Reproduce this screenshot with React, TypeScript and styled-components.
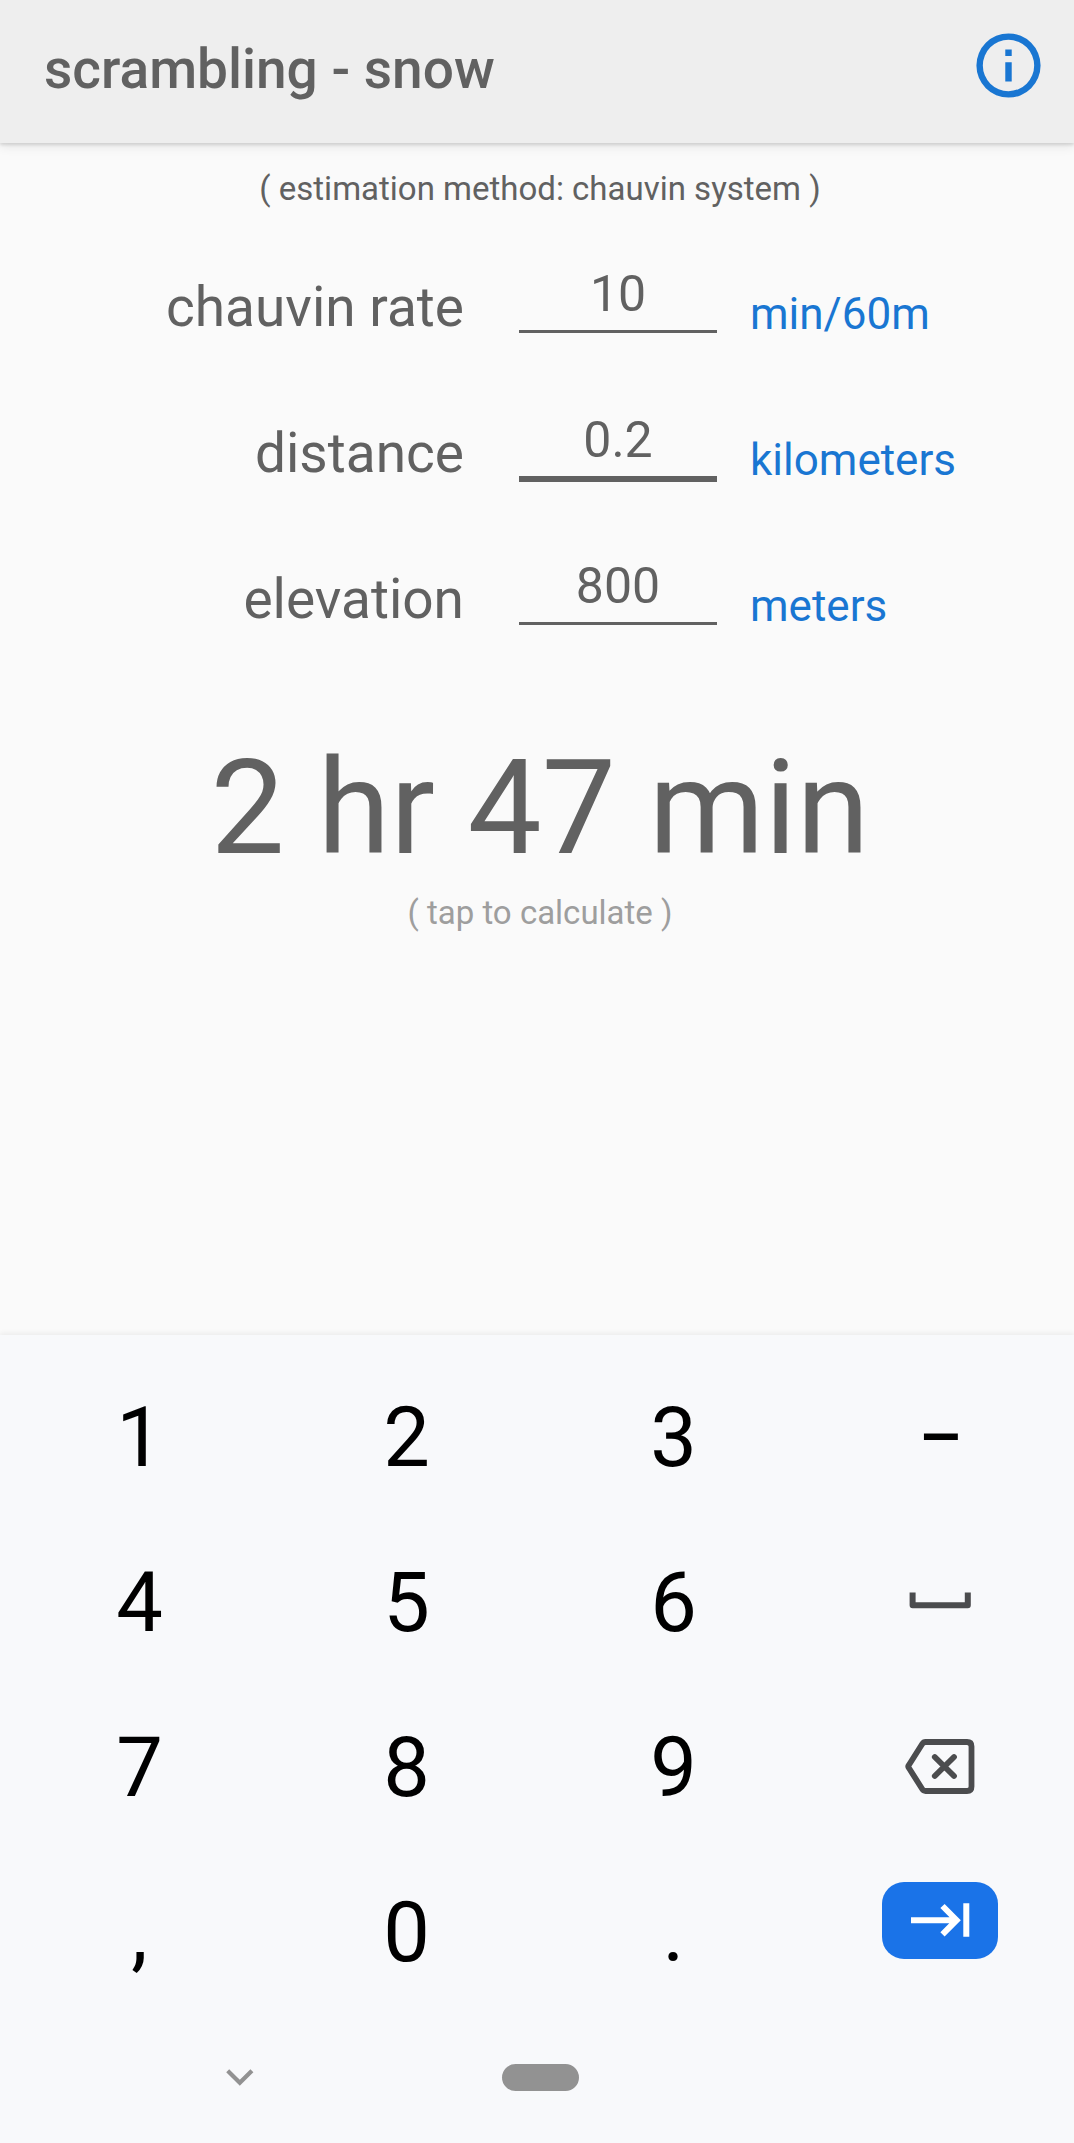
import React from "react";
import styled, { createGlobalStyle } from "styled-components";

const Global = createGlobalStyle`
  * { box-sizing: border-box; }
  body { margin: 0; background: #fafafa; font-family: Roboto, "Liberation Sans", sans-serif; }
`;

const Screen = styled.div`
  width: 1074px;
  height: 2143px;
  display: flex;
  flex-direction: column;
  background: #fafafa;
  color: #616161;
  overflow: hidden;
`;

const Header = styled.header`
  height: 143px;
  flex: none;
  background: #eeeeee;
  box-shadow: 0 2px 3px rgba(0, 0, 0, 0.12), 0 4px 10px rgba(0, 0, 0, 0.08);
  display: flex;
  align-items: flex-start;
  justify-content: space-between;
  padding: 27px 27px 0 44px;
`;

const Title = styled.h1`
  margin: 10px 0 0;
  font-size: 55px;
  line-height: 64px;
  font-weight: 500;
  white-space: nowrap;
`;

const InfoIcon = styled.svg`
  width: 77px;
  height: 77px;
  display: block;
`;

const Main = styled.main`
  height: 1192px;
  flex: none;
  display: flex;
  flex-direction: column;
  align-items: center;
  padding-top: 26px;
`;

const Note = styled.p<{ $muted?: boolean }>`
  margin: 0;
  padding-left: 6px;
  font-size: 33px;
  line-height: 40px;
  white-space: nowrap;
  color: ${p => (p.$muted ? "#9e9e9e" : "#616161")};
`;

const Form = styled.div`
  width: 100%;
  margin-top: 54px;
`;

const Row = styled.label`
  height: 146px;
  display: grid;
  grid-template-columns: 464px 198px 1fr;
  column-gap: 55px;
  align-items: start;
`;

const Name = styled.span`
  text-align: right;
  font-size: 55px;
  line-height: 64px;
  padding-top: 12px;
  white-space: nowrap;
`;

const Value = styled.span<{ $active?: boolean }>`
  padding-top: 1px;
  font-size: 50px;
  line-height: 60px;
  height: ${p => (p.$active ? 73 : 70)}px;
  text-align: center;
  border-bottom: ${p => (p.$active ? 6 : 3)}px solid #616161;
`;

const Unit = styled.span`
  color: #1976d2;
  font-size: 44px;
  line-height: 52px;
  padding-top: 25px;
  margin-left: -22px;
`;

const Result = styled.div`
  margin-top: 30px;
  padding-left: 6px;
  font-size: 132px;
  line-height: 154px;
  white-space: nowrap;
`;

const Hint = styled.div`
  margin-top: 8px;
`;

const Keyboard = styled.section`
  flex: 1;
  background: #f8f9fb;
  box-shadow: 0 -2px 5px rgba(0, 0, 0, 0.06);
  padding-top: 20px;
`;

const Keys = styled.div`
  display: grid;
  grid-template-columns: repeat(4, 267px);
  grid-auto-rows: 165px;
  padding-left: 6px;
`;

const Key = styled.div<{ $dash?: boolean }>`
  display: flex;
  align-items: center;
  justify-content: center;
  font-size: ${p => (p.$dash ? 68 : 83)}px;
  font-weight: ${p => (p.$dash ? 500 : 400)};
  color: #000;
`;

const IconKey = styled(Key)<{ $raise: number }>`
  padding: 0 2px ${p => p.$raise}px 0;
`;

const NextButton = styled.div`
  width: 116px;
  height: 77px;
  border-radius: 22px;
  background: #1a73e8;
`;

const Glyph = styled.svg`
  display: block;
  overflow: visible;
  fill: none;
`;

const NavBar = styled.nav`
  height: 124px;
  display: flex;
  align-items: center;
  padding-left: 226px;
`;

const HomePill = styled.div`
  width: 77px;
  height: 27px;
  margin-left: 248px;
  border-radius: 14px;
  background: #929292;
`;

const fields = [
  { name: "chauvin rate", value: "10", unit: "min/60m" },
  { name: "distance", value: "0.2", unit: "kilometers", active: true },
  { name: "elevation", value: "800", unit: "meters" },
];

const SpaceGlyph = () => (
  <Glyph width="62" height="16" viewBox="0 0 62 16">
    <path d="M3.6 0.6V13.2H58.8V0.6" stroke="#4b4c4e" strokeWidth="6" strokeLinejoin="round" />
  </Glyph>
);

const BackspaceGlyph = () => (
  <Glyph width="70" height="55" viewBox="0 0 70 55" stroke="#4b4c4e" strokeWidth="5.8">
    <path
      d="M20.5 3H62Q66.5 3 66.5 7.5V47.5Q66.5 52 62 52H20.5Q18.5 52 17.2 50L3.6 28.5Q2.9 27.5 3.6 26.5L17.2 5Q18.5 3 20.5 3Z"
      strokeLinejoin="round"
    />
    <path d="M29.8 18L49 37M49 18L29.8 37" strokeLinecap="round" />
  </Glyph>
);

const NextGlyph = () => (
  <Glyph width="116" height="77" viewBox="0 0 116 77" stroke="#fff" strokeWidth="6">
    <path d="M29 38.2H74M60.5 24L74.6 38.2L60.5 52.4M84.3 21.2V54.8" />
  </Glyph>
);

const ChevronGlyph = () => (
  <Glyph width="28" height="17" viewBox="0 0 28 17">
    <path d="M1.7 1.7L13.8 13.8L25.9 1.7" stroke="#929292" strokeWidth="4.2" />
  </Glyph>
);

export default function App() {
  return (
    <>
      <Global />
      <Screen>
        <Header>
          <Title>scrambling - snow</Title>
          <InfoIcon viewBox="0 0 24 24" fill="#1976d2">
            <path d="M11 7h2v2h-2zm0 4h2v6h-2zm1-9a10 10 0 1 0 0 20 10 10 0 0 0 0-20m0 18a8 8 0 1 1 0-16 8 8 0 0 1 0 16" />
          </InfoIcon>
        </Header>
        <Main>
          <Note>( estimation method: chauvin system )</Note>
          <Form>
            {fields.map(f => (
              <Row key={f.name}>
                <Name>{f.name}</Name>
                <Value $active={f.active}>{f.value}</Value>
                <Unit>{f.unit}</Unit>
              </Row>
            ))}
          </Form>
          <Result>2 hr 47 min</Result>
          <Hint>
            <Note $muted>( tap to calculate )</Note>
          </Hint>
        </Main>
        <Keyboard>
          <Keys>
            <Key>1</Key>
            <Key>2</Key>
            <Key>3</Key>
            <Key $dash>–</Key>
            <Key>4</Key>
            <Key>5</Key>
            <Key>6</Key>
            <IconKey $raise={5}><SpaceGlyph /></IconKey>
            <Key>7</Key>
            <Key>8</Key>
            <Key>9</Key>
            <IconKey $raise={2}><BackspaceGlyph /></IconKey>
            <Key>,</Key>
            <Key>0</Key>
            <Key>.</Key>
            <IconKey $raise={24}>
              <NextButton><NextGlyph /></NextButton>
            </IconKey>
          </Keys>
          <NavBar>
            <ChevronGlyph />
            <HomePill />
          </NavBar>
        </Keyboard>
      </Screen>
    </>
  );
}
